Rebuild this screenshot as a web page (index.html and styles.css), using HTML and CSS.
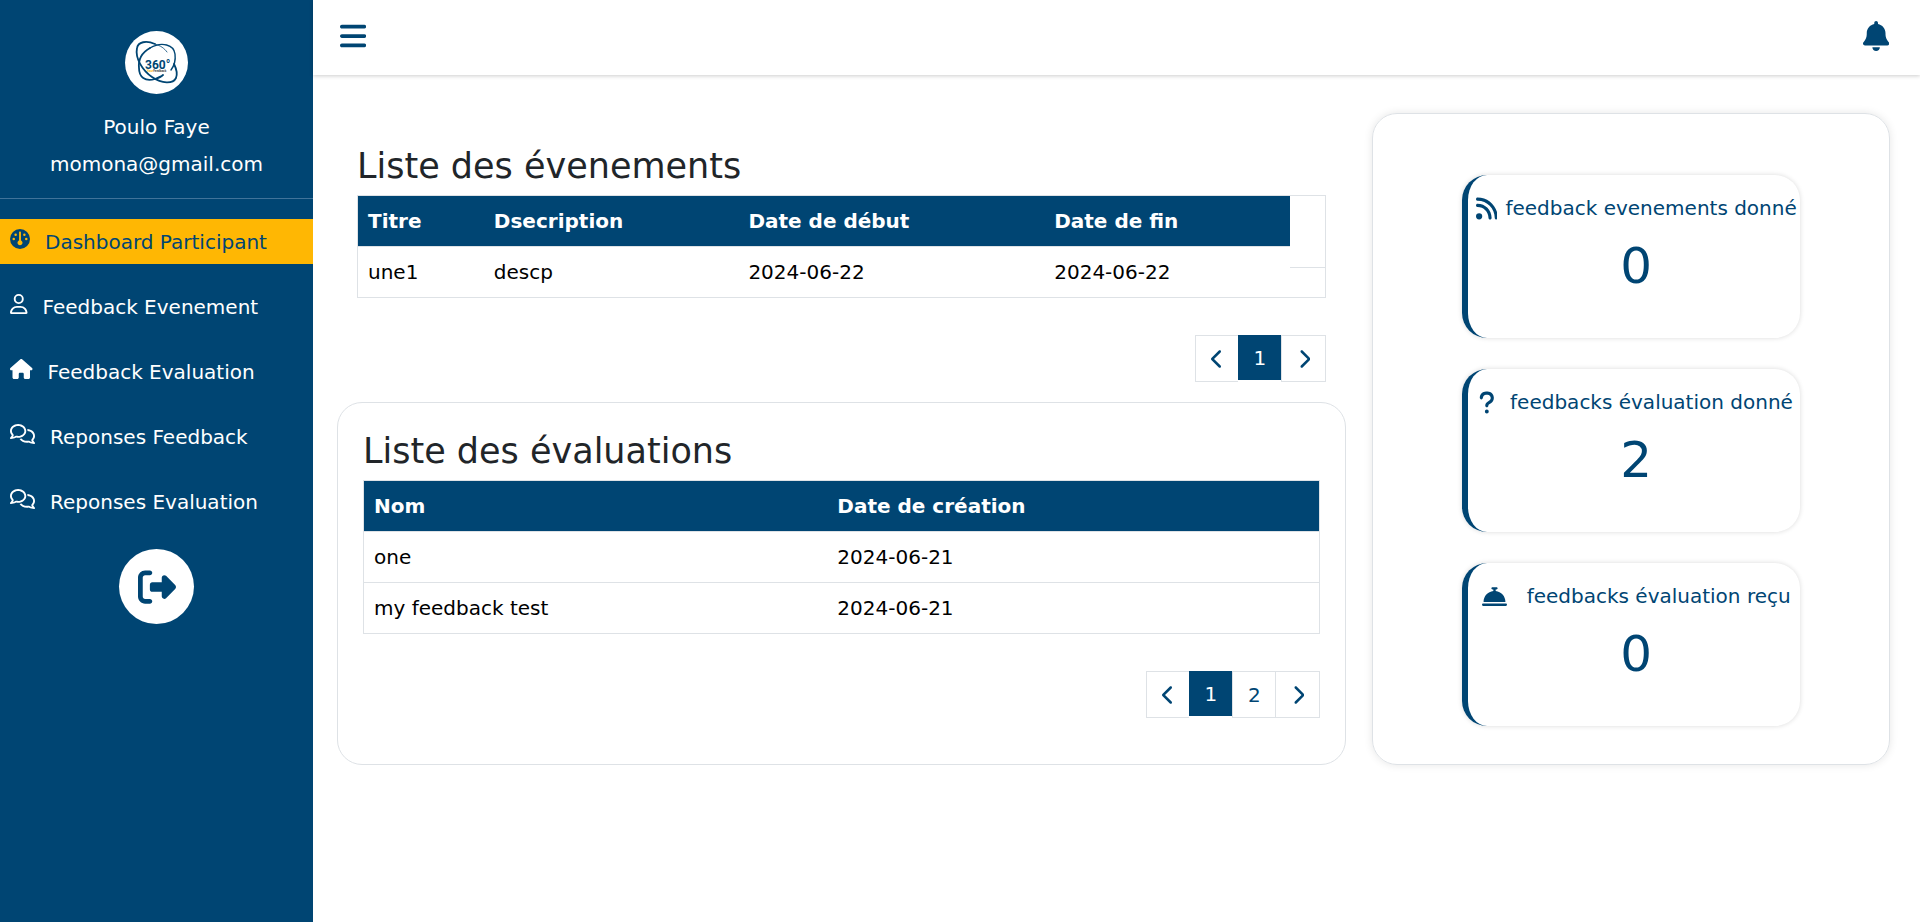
FILE: index.html
```html
<!DOCTYPE html>
<html lang="fr">
<head>
<meta charset="utf-8">
<meta name="viewport" content="width=device-width, initial-scale=1">
<title>Dashboard Participant</title>
<link rel="stylesheet" href="styles.css">
</head>
<body>
<svg class="sprite" aria-hidden="true">
  <symbol id="i-comments" viewBox="0 0 640 512"><path d="M88.2 309.1c9.8-18.3 6.8-40.8-7.5-55.8C59.4 230.9 48 204 48 176c0-63.5 63.8-128 160-128s160 64.5 160 128s-63.8 128-160 128c-13.1 0-25.8-1.3-37.8-3.6c-10.4-2-21.2-.6-30.7 4.2c-4.1 2.1-8.3 4.1-12.6 6c-16 7.2-32.9 13.5-49.9 18c2.8-4.6 5.4-9.1 7.9-13.6c1.1-1.9 2.2-3.9 3.2-5.9zM208 352c114.9 0 208-78.8 208-176S322.9 0 208 0S0 78.8 0 176c0 41.8 17.2 80.1 45.9 110.3c-.9 1.7-1.9 3.5-2.8 5.1c-10.3 18.4-22.3 36.5-36.6 52.1c-6.6 7-8.3 17.2-4.6 25.9C5.8 378.3 14.4 384 24 384c43 0 86.5-13.3 122.7-29.7c4.8-2.2 9.6-4.5 14.2-6.8c15.1 3 30.9 4.5 47.1 4.5zM432 480c16.2 0 31.9-1.6 47.1-4.5c4.6 2.3 9.4 4.6 14.2 6.8C529.5 498.7 573 512 616 512c9.6 0 18.2-5.7 22-14.5c3.8-8.8 2-19-4.6-25.9c-14.2-15.6-26.2-33.7-36.6-52.1c-.9-1.7-1.9-3.4-2.8-5.1C622.8 384.1 640 345.8 640 304c0-94.4-87.9-171.5-198.2-175.8c4.1 15.2 6.2 31.2 6.2 47.8l0 .6c87.2 6.7 144 67.5 144 127.4c0 28-11.4 54.9-32.7 77.2c-14.3 15-17.3 37.6-7.5 55.8c1.1 2 2.2 4 3.2 5.9c2.5 4.5 5.2 9 7.9 13.6c-17-4.5-33.9-10.7-49.9-18c-4.3-1.9-8.5-3.9-12.6-6c-9.5-4.8-20.3-6.2-30.7-4.2c-12.1 2.4-24.7 3.6-37.8 3.6c-61.7 0-110-26.5-136.8-62.3c-16 5.4-32.8 9.4-50 11.8C279 439.8 350 480 432 480z"/></symbol>
  <symbol id="i-left" viewBox="0 0 320 512"><path d="M9.4 233.4c-12.5 12.5-12.5 32.8 0 45.3l192 192c12.5 12.5 32.8 12.5 45.3 0s12.5-32.8 0-45.3L77.3 256 246.6 86.6c12.5-12.5 12.5-32.8 0-45.3s-32.8-12.5-45.3 0l-192 192z"/></symbol>
  <symbol id="i-right" viewBox="0 0 320 512"><path d="M310.6 233.4c12.5 12.5 12.5 32.8 0 45.3l-192 192c-12.5 12.5-32.8 12.5-45.3 0s-12.5-32.8 0-45.3L242.7 256 73.4 86.6c-12.5-12.5-12.5-32.8 0-45.3s32.8-12.5 45.3 0l192 192z"/></symbol>
</svg>
<div class="app">
  <aside class="sidebar">
    <div class="profile">
      <svg class="avatar" viewBox="0 0 63 63" role="img" aria-label="360° Feedback">
        <circle cx="31.5" cy="31.5" r="31.5" fill="#fff"/>
        <g fill="none" stroke="#004573" stroke-linecap="round">
          <path stroke-width="1.8" d="M30 13C21 9 13 11 12 17C10 27 17 39 27 46C37 53 48 53 51 47C53 42 51 37 49 33"/>
          <path stroke-width="1.4" d="M25 17C37 10 49 14 50 23C51 31 49 35 46 39"/>
          <path stroke-width="1.8" d="M25 17C18 21 13 28 14 37C14 46 20 51 30 48C33 47 36 46 38 44"/>
          <path stroke-width=".8" d="M30 13C36 15 39 17 42 21"/>
        </g>
        <text class="logo-number" x="20" y="38">360°</text>
        <text class="logo-sub" x="22" y="41"><tspan fill="#ffb703">Your</tspan>Feedback</text>
      </svg>
      <p class="profile-name">Poulo Faye</p>
      <p class="profile-mail">momona@gmail.com</p>
    </div>
    <nav class="menu" aria-label="Menu principal">
      <a class="menu-link active" href="#" aria-current="page"><svg class="icon" viewBox="0 0 512 512"><path d="M0 256a256 256 0 1 1 512 0A256 256 0 1 1 0 256zm320 96c0-26.9-16.5-49.9-40-59.3V88c0-13.3-10.7-24-24-24s-24 10.7-24 24V292.7c-23.5 9.5-40 32.5-40 59.3c0 35.3 28.7 64 64 64s64-28.7 64-64zM144 176a32 32 0 1 0 0-64 32 32 0 1 0 0 64zm-16 80a32 32 0 1 0 -64 0 32 32 0 1 0 64 0zm288 32a32 32 0 1 0 0-64 32 32 0 1 0 0 64zM400 144a32 32 0 1 0 -64 0 32 32 0 1 0 64 0z"/></svg>Dashboard Participant</a>
      <a class="menu-link" href="#"><svg class="icon" viewBox="0 0 448 512"><path d="M304 128a80 80 0 1 0 -160 0 80 80 0 1 0 160 0zM96 128a128 128 0 1 1 256 0A128 128 0 1 1 96 128zM49.3 464H398.7c-8.9-63.3-63.3-112-129-112H178.3c-65.7 0-120.1 48.7-129 112zM0 482.3C0 383.8 79.8 304 178.3 304h91.4C368.2 304 448 383.8 448 482.3c0 16.4-13.3 29.7-29.7 29.7H29.7C13.3 512 0 498.7 0 482.3z"/></svg>Feedback Evenement</a>
      <a class="menu-link" href="#"><svg class="icon" viewBox="0 0 576 512"><path d="M575.8 255.5c0 18-15 32.1-32 32.1h-32l.7 160.2c0 2.7-.2 5.4-.5 8.1V472c0 22.1-17.9 40-40 40H456c-1.1 0-2.2 0-3.3-.1c-1.4 .1-2.8 .1-4.2 .1H416 392c-22.1 0-40-17.9-40-40V448 384c0-17.7-14.3-32-32-32H256c-17.7 0-32 14.3-32 32v64 24c0 22.1-17.9 40-40 40H160 128.1c-1.5 0-3-.1-4.5-.2c-1.2 .1-2.4 .2-3.6 .2H104c-22.1 0-40-17.9-40-40V360c0-.9 0-1.9 .1-2.8V287.6H32c-18 0-32-14-32-32.1c0-9 3-17 10-24L266.4 8c7-7 15-8 22-8s15 2 21 7L564.8 231.5c8 7 12 15 11 24z"/></svg>Feedback Evaluation</a>
      <a class="menu-link" href="#"><svg class="icon" viewBox="0 0 640 512"><use href="#i-comments"/></svg>Reponses Feedback</a>
      <a class="menu-link" href="#"><svg class="icon" viewBox="0 0 640 512"><use href="#i-comments"/></svg>Reponses Evaluation</a>
    </nav>
    <button class="logout" type="button" aria-label="Se déconnecter"><svg class="logout-icon" viewBox="0 0 512 512"><path d="M377.9 105.9L500.7 228.7c7.2 7.2 11.3 17.1 11.3 27.3s-4.1 20.1-11.3 27.3L377.9 406.1c-6.4 6.4-15 9.9-24 9.9c-18.7 0-33.9-15.2-33.9-33.9l0-62.1-128 0c-17.7 0-32-14.3-32-32l0-64c0-17.7 14.3-32 32-32l128 0 0-62.1c0-18.7 15.2-33.9 33.9-33.9c9 0 17.6 3.6 24 9.9zM160 96L96 96c-17.7 0-32 14.3-32 32l0 256c0 17.7 14.3 32 32 32l64 0c17.7 0 32 14.3 32 32s-14.3 32-32 32l-64 0c-53 0-96-43-96-96L0 128C0 75 43 32 96 32l64 0c17.7 0 32 14.3 32 32s-14.3 32-32 32z"/></svg></button>
  </aside>
  <div class="page">
    <header class="topbar">
      <button class="icon-button" type="button" aria-label="Menu"><svg class="icon-large" viewBox="0 0 448 512"><path d="M0 96C0 78.3 14.3 64 32 64H416c17.7 0 32 14.3 32 32s-14.3 32-32 32H32C14.3 128 0 113.7 0 96zM0 256c0-17.7 14.3-32 32-32H416c17.7 0 32 14.3 32 32s-14.3 32-32 32H32c-17.7 0-32-14.3-32-32zM448 416c0 17.7-14.3 32-32 32H32c-17.7 0-32-14.3-32-32s14.3-32 32-32H416c17.7 0 32 14.3 32 32z"/></svg></button>
      <button class="icon-button" type="button" aria-label="Notifications"><svg class="icon-large" viewBox="0 0 448 512"><path d="M224 0c-17.7 0-32 14.3-32 32V51.2C119 66 64 130.6 64 208v18.8c0 47-17.3 92.4-48.5 127.6l-7.4 8.3c-8.4 9.4-10.4 22.9-5.3 34.4S19.4 416 32 416H416c12.6 0 24-7.4 29.2-18.9s3.1-25-5.3-34.4l-7.4-8.3C401.3 319.2 384 273.9 384 226.8V208c0-77.4-55-142-128-156.8V32c0-17.7-14.3-32-32-32zm45.3 493.3c12-12 18.7-28.3 18.7-45.3H224 160c0 17 6.7 33.3 18.7 45.3s28.3 18.7 45.3 18.7s33.3-6.7 45.3-18.7z"/></svg></button>
    </header>
    <main class="content">
      <div class="lists">
        <section class="events">
          <h1 class="title">Liste des évenements</h1>
          <div class="frame">
            <table class="table">
              <thead><tr><th class="col-title">Titre</th><th class="col-desc">Dsecription</th><th class="col-start">Date de début</th><th class="col-end">Date de fin</th></tr></thead>
              <tbody><tr><td>une1</td><td>descp</td><td>2024-06-22</td><td>2024-06-22</td></tr></tbody>
            </table>
            <div class="frame-side"></div>
          </div>
          <nav class="pagination" aria-label="Pages des évenements">
            <button class="page-button" type="button" aria-label="Page précédente"><svg class="chevron" viewBox="0 0 320 512"><use href="#i-left"/></svg></button>
            <button class="page-button current" type="button" aria-current="page">1</button>
            <button class="page-button next" type="button" aria-label="Page suivante"><svg class="chevron" viewBox="0 0 320 512"><use href="#i-right"/></svg></button>
          </nav>
        </section>
        <section class="evaluations">
          <h2 class="title">Liste des évaluations</h2>
          <div class="frame">
            <table class="table">
              <thead><tr><th class="col-name">Nom</th><th>Date de création</th></tr></thead>
              <tbody><tr><td>one</td><td>2024-06-21</td></tr><tr><td>my feedback test</td><td>2024-06-21</td></tr></tbody>
            </table>
          </div>
          <nav class="pagination" aria-label="Pages des évaluations">
            <button class="page-button" type="button" aria-label="Page précédente"><svg class="chevron" viewBox="0 0 320 512"><use href="#i-left"/></svg></button>
            <button class="page-button current" type="button" aria-current="page">1</button>
            <button class="page-button" type="button">2</button>
            <button class="page-button next" type="button" aria-label="Page suivante"><svg class="chevron" viewBox="0 0 320 512"><use href="#i-right"/></svg></button>
          </nav>
        </section>
      </div>
      <section class="stats" aria-label="Statistiques">
        <article class="stat">
          <h3 class="stat-label gap-small"><svg class="stat-icon" viewBox="0 0 448 512"><path d="M0 64C0 46.3 14.3 32 32 32c229.8 0 416 186.2 416 416c0 17.7-14.3 32-32 32s-32-14.3-32-32C384 253.6 226.4 96 32 96C14.3 96 0 81.7 0 64zM0 416a64 64 0 1 1 128 0A64 64 0 1 1 0 416zM32 160c159.1 0 288 128.9 288 288c0 17.7-14.3 32-32 32s-32-14.3-32-32c0-123.7-100.3-224-224-224c-17.7 0-32-14.3-32-32s14.3-32 32-32z"/></svg>feedback evenements donné</h3>
          <p class="stat-value">0</p>
        </article>
        <article class="stat">
          <h3 class="stat-label gap-medium"><svg class="stat-icon" viewBox="0 0 320 512"><path d="M80 160c0-35.3 28.7-64 64-64h32c35.3 0 64 28.7 64 64v3.6c0 21.8-11.1 42.1-29.4 53.8l-42.2 27.1c-25.2 16.2-40.4 44.1-40.4 74V320c0 17.7 14.3 32 32 32s32-14.3 32-32v-1.4c0-8.2 4.2-15.8 11-20.2l42.2-27.1c36.6-23.6 58.8-64.1 58.8-107.7V160c0-70.7-57.3-128-128-128H144C73.3 32 16 89.3 16 160c0 17.7 14.3 32 32 32s32-14.3 32-32zm80 320a40 40 0 1 0 0-80 40 40 0 1 0 0 80z"/></svg>feedbacks évaluation donné</h3>
          <p class="stat-value">2</p>
        </article>
        <article class="stat">
          <h3 class="stat-label gap-large"><svg class="stat-icon" viewBox="0 0 512 512"><path d="M216 64c-13.3 0-24 10.7-24 24s10.7 24 24 24h16v33.3C119.6 157.2 32 252.4 32 368H480c0-115.6-87.6-210.8-200-222.7V112h16c13.3 0 24-10.7 24-24s-10.7-24-24-24H256 216zM24 400c-13.3 0-24 10.7-24 24s10.7 24 24 24H488c13.3 0 24-10.7 24-24s-10.7-24-24-24H24z"/></svg>feedbacks évaluation reçu</h3>
          <p class="stat-value">0</p>
        </article>
      </section>
    </main>
  </div>
</div>
</body>
</html>
```

FILE: styles.css
```css
:root {
  --blue: #004573;
  --yellow: #ffb703;
  --line: #dee2e6;
}

* { box-sizing: border-box; }

body {
  margin: 0;
  background: #fff;
  color: #000;
  font: 20px/30px Verdana, "DejaVu Sans", sans-serif;
}

h1, h2, h3, p { margin: 0; font-weight: 400; }

button {
  border: 0;
  padding: 0;
  background: none;
  color: var(--blue);
  font: inherit;
  cursor: pointer;
}

svg { display: block; fill: currentColor; }

.sprite { position: absolute; width: 0; height: 0; }

.app { display: flex; min-height: 100vh; }

/* Sidebar */
.sidebar {
  flex: 0 0 313px;
  display: flex;
  flex-direction: column;
  align-items: center;
  background: var(--blue);
  color: #fff;
}

.profile {
  align-self: stretch;
  display: flex;
  flex-direction: column;
  align-items: center;
  gap: 7px;
  padding: 31px 8px 19px;
  border-bottom: 1px solid #40739a;
}

.avatar { width: 63px; height: 63px; margin-bottom: 11px; }

.logo-number {
  fill: var(--blue);
  font: bold 12px "Roboto", sans-serif;
}

.logo-sub {
  fill: #444;
  font: bold 3px "Roboto", sans-serif;
}

.menu {
  align-self: stretch;
  display: flex;
  flex-direction: column;
  gap: 20px;
  margin: 20px 0 25px;
}

.menu-link {
  display: flex;
  align-items: baseline;
  gap: 15px;
  padding: 8px 10px 7px;
  color: #fff;
  text-decoration: none;
}

.menu-link.active { background: var(--yellow); color: var(--blue); }

.icon { height: 20px; flex: none; }

.logout {
  display: grid;
  place-items: center;
  width: 75px;
  height: 75px;
  border-radius: 50%;
  background: #fff;
}

.logout-icon { width: 38px; height: 38px; }

/* Page */
.page { flex: 1; min-width: 0; }

.topbar {
  display: flex;
  justify-content: space-between;
  align-items: center;
  height: 75px;
  padding: 0 31px 3px 27px;
  box-shadow: 0 1px 4px rgba(0, 0, 0, .2);
}

.icon-large { height: 30px; }

.content {
  display: grid;
  grid-template-columns: minmax(0, 39fr) minmax(0, 20fr);
  gap: 26px;
  padding: 38px 30px 38px 24px;
}

.lists { display: flex; flex-direction: column; }

.events { padding: 32px 20px 20px; }

.evaluations {
  flex: 1;
  padding: 27px 25px 44px;
  border: 1px solid var(--line);
  border-radius: 25px;
}

.title {
  margin-bottom: 8px;
  color: #212529;
  font-size: 35px;
  line-height: 42px;
}

.frame {
  display: flex;
  border: 1px solid var(--line);
}

.table {
  flex: 1;
  border-collapse: collapse;
  text-align: left;
}

.table th {
  padding: 10px;
  background: var(--blue);
  color: #fff;
  font-weight: 700;
}

.table td { padding: 10px; border-top: 1px solid var(--line); }

.col-title { width: 13.5%; }
.col-desc { width: 27.3%; }
.col-start { width: 32.8%; }
.col-end { width: 26.4%; }
.col-name { width: 48.5%; }

.frame-side {
  flex: 0 0 35px;
  display: flex;
  flex-direction: column;
}

.frame-side::before {
  content: "";
  flex: 0 0 70%;
  border-bottom: 1px solid var(--line);
}

.pagination {
  display: flex;
  justify-content: flex-end;
  align-items: flex-start;
  margin-top: 37px;
}

.page-button {
  display: grid;
  place-items: center;
  width: 43px;
  height: 47px;
  border: 1px solid var(--line);
  border-right-width: 0;
}

.page-button.current {
  height: 45px;
  border: 0;
  background: var(--blue);
  color: #fff;
}

.page-button.next { width: 45px; border-right-width: 1px; }

.chevron { height: 20px; }

/* Statistics */
.stats {
  display: flex;
  flex-direction: column;
  align-items: center;
  gap: 31px;
  padding: 61px 0 38px;
  border: 1px solid var(--line);
  border-radius: 25px;
  box-shadow: 0 0 8px rgba(0, 0, 0, .1);
}

.stat {
  width: 65.5%;
  padding: 18px 0 42px 4px;
  border-left: 6px solid var(--blue);
  border-radius: 25px;
  box-shadow: 0 0 5px rgba(0, 0, 0, .15);
  color: var(--blue);
  text-align: center;
}

.stat-label {
  display: flex;
  justify-content: center;
  align-items: center;
  margin-bottom: 13px;
  font-size: 20px;
  white-space: nowrap;
}

.stat-icon { height: 25px; flex: none; }

.gap-small { gap: 8px; }
.gap-medium { gap: 15px; }
.gap-large { gap: 20px; }

.stat-value { font-size: 50px; line-height: 60px; }
```
